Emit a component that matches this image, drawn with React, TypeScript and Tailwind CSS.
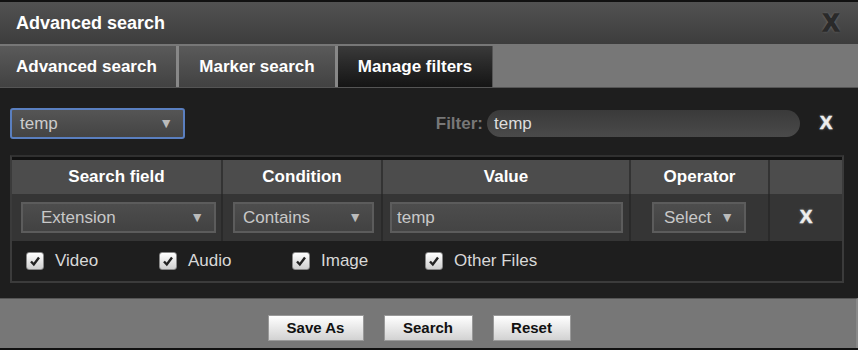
import React from "react"

const font = { fontFamily: '"Liberation Sans", Arial, sans-serif' }

const Arrow = () => <span className="text-[14px] text-[#bbb]">▼</span>

const Check: React.FC<{ label: string; className?: string }> = ({ label, className }) => (
  <div className={`flex items-center gap-[11px] ${className ?? ""}`}>
    <div className="w-[18px] h-[18px] rounded-[3px] bg-gradient-to-b from-white to-[#cfcfcf] border border-[#888] flex items-center justify-center">
      <svg width="12" height="12" viewBox="0 0 12 12">
        <path d="M2 6.5 L4.8 9.5 L10 2.5" stroke="#222" strokeWidth="2.4" fill="none" />
      </svg>
    </div>
    <span className="text-[17px] text-[#d8d8d8]">{label}</span>
  </div>
)

const App: React.FC = () => {
  return (
    <div style={font} className="w-[858px] h-[350px] bg-[#111] flex flex-col overflow-hidden">
      <div className="h-[42px] mt-[2px] bg-gradient-to-b from-[#525252] to-[#3d3d3d] flex items-center justify-between pl-[16px] pr-[19px]">
        <span className="text-white font-bold text-[18px]">Advanced search</span>
        <span className="text-[#2a2a2a] font-black text-[24px] [-webkit-text-stroke:1.5px_#2a2a2a] [text-shadow:0_0_3px_#999]">X</span>
      </div>
      <div className="h-[44px] bg-[#777] border-b border-[#555] flex items-end">
        <div className="h-[41px] w-[179px] bg-gradient-to-b from-[#5a5a5a] to-[#424242] border-r-[3px] border-[#888] flex items-center pl-[16px] text-white font-bold text-[17px]">
          Advanced search
        </div>
        <div className="h-[41px] w-[159px] bg-gradient-to-b from-[#5a5a5a] to-[#424242] border-r-[3px] border-[#888] flex items-center justify-center text-white font-bold text-[17px]">
          Marker search
        </div>
        <div className="h-[41px] w-[155px] bg-gradient-to-b from-[#3a3a3a] to-[#151515] border-r border-[#555] flex items-center justify-center text-white font-bold text-[17px]">
          Manage filters
        </div>
      </div>
      <div className="flex-1 bg-[#1e1e1e] px-[10px] pt-[20px]">
        <div className="flex items-center h-[31px]">
          <div className="w-[175px] h-[31px] rounded-[3px] border-2 border-[#5a7fc0] bg-gradient-to-b from-[#555] to-[#444] flex items-center justify-between pl-[8px] pr-[10px]">
            <span className="text-[17px] text-[#ccc]">temp</span>
            <Arrow />
          </div>
          <span className="ml-auto text-[17px] font-bold text-[#777] mr-[4px]">Filter:</span>
          <div className="w-[313px] h-[27px] rounded-full bg-gradient-to-b from-[#3a3a3a] to-[#4a4a4a] flex items-center pl-[7px] text-[17px] text-[#ddd]">
            temp
          </div>
          <div className="w-[48px] flex justify-center pl-[4px]">
            <span className="text-[#eee] font-black text-[19px] [-webkit-text-stroke:0.5px_#eee] [text-shadow:0_0_3px_#999]">X</span>
          </div>
        </div>
        <div className="mt-[16px] w-[834px] border-2 border-[#3b3b3b] border-t-[#303030] bg-[#1e1e1e]">
          <div className="border-t-[3px] border-[#111] grid grid-cols-[211px_160px_248px_139px_1fr] h-[37px] bg-[#4c4c4c]">
            <div className="flex items-center justify-center text-white font-bold text-[17px] border-r-2 border-[#333]">Search field</div>
            <div className="flex items-center justify-center text-white font-bold text-[17px] border-r-2 border-[#333]">Condition</div>
            <div className="flex items-center justify-center text-white font-bold text-[17px] border-r-2 border-[#333]">Value</div>
            <div className="flex items-center justify-center text-white font-bold text-[17px] border-r-2 border-[#333]">Operator</div>
            <div></div>
          </div>
          <div className="grid grid-cols-[211px_160px_248px_139px_1fr] h-[47px] bg-[#353535]">
            <div className="flex items-center pl-[9px] border-r-2 border-[#2a2a2a]">
              <div className="w-[195px] h-[31px] border-2 border-[#5c5c5c] bg-gradient-to-b from-[#4d4d4d] to-[#424242] flex items-center justify-between pl-[18px] pr-[10px]">
                <span className="text-[17px] text-[#c8c8c8]">Extension</span>
                <Arrow />
              </div>
            </div>
            <div className="flex items-center pl-[10px] border-r-2 border-[#2a2a2a]">
              <div className="w-[141px] h-[31px] border-2 border-[#5c5c5c] bg-gradient-to-b from-[#4d4d4d] to-[#424242] flex items-center justify-between pl-[8px] pr-[10px]">
                <span className="text-[17px] text-[#c8c8c8]">Contains</span>
                <Arrow />
              </div>
            </div>
            <div className="flex items-center pl-[7px] border-r-2 border-[#2a2a2a]">
              <div className="w-[233px] h-[31px] border-2 border-[#5c5c5c] bg-gradient-to-b from-[#4d4d4d] to-[#444] flex items-center pl-[5px]">
                <span className="text-[17px] text-[#c8c8c8]">temp</span>
              </div>
            </div>
            <div className="flex items-center pl-[21px] border-r-2 border-[#2a2a2a]">
              <div className="w-[94px] h-[31px] border-2 border-[#5c5c5c] bg-gradient-to-b from-[#4d4d4d] to-[#424242] flex items-center justify-between pl-[10px] pr-[10px]">
                <span className="text-[17px] text-[#c8c8c8]">Select</span>
                <Arrow />
              </div>
            </div>
            <div className="flex items-center justify-center">
              <span className="text-[#eee] font-black text-[19px] [-webkit-text-stroke:0.5px_#eee] [text-shadow:0_0_3px_#999]">X</span>
            </div>
          </div>
          <div className="h-[40px] flex items-center pl-[14px] pb-[1px]">
            <Check label="Video" className="w-[133px]" />
            <Check label="Audio" className="w-[133px]" />
            <Check label="Image" className="w-[133px]" />
            <Check label="Other Files" />
          </div>
        </div>
      </div>
      <div className="h-[50px] mb-[2px] bg-[#777] border-t border-[#555] border-r-2 border-r-[#888] flex items-start justify-center gap-[20px] pr-[18px] pt-[16px]">
        <div className="w-[96px] h-[26px] border border-[#999] bg-gradient-to-b from-white to-[#d2d2d2] flex items-center justify-center text-[15px] font-bold text-[#111]">Save As</div>
        <div className="w-[89px] h-[26px] border border-[#999] bg-gradient-to-b from-white to-[#d2d2d2] flex items-center justify-center text-[15px] font-bold text-[#111]">Search</div>
        <div className="w-[78px] h-[26px] border border-[#999] bg-gradient-to-b from-white to-[#d2d2d2] flex items-center justify-center text-[15px] font-bold text-[#111]">Reset</div>
      </div>
    </div>
  )
}

export default App
